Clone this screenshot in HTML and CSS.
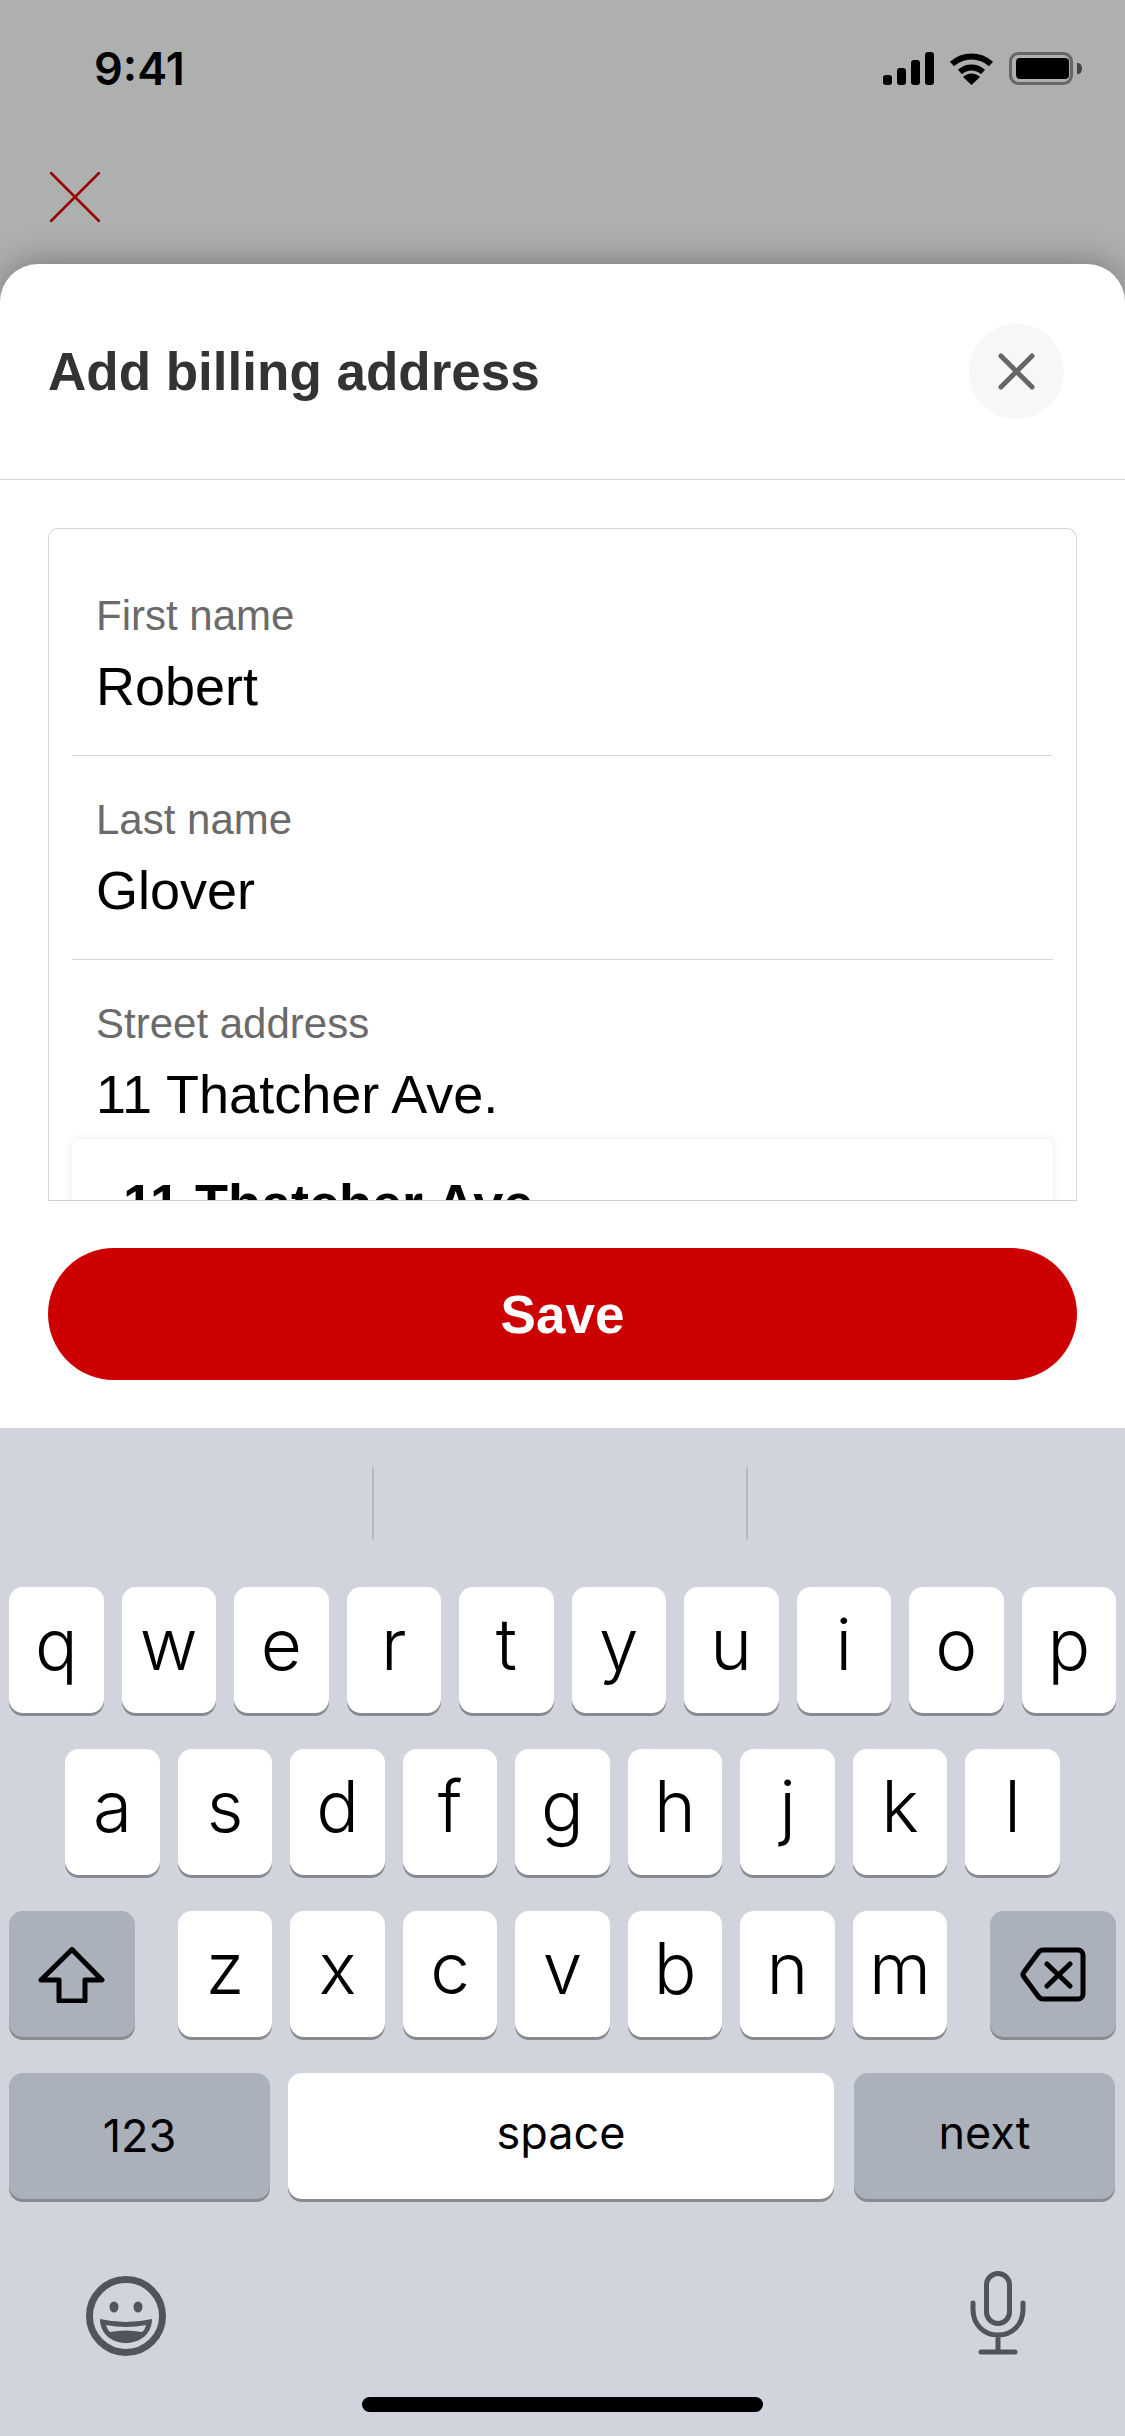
FILE: index.html
```html
<!DOCTYPE html>
<html lang="en">
<head>
    <meta charset="UTF-8">
    <meta name="viewport" content="width=device-width, initial-scale=1.0">
    <title>Add billing address</title>
    <link rel="stylesheet" href="styles.css">
</head>
<body>
    <!-- status bar -->
    <header class="status-bar">
        <span class="status-time">9:41</span>
        <div class="status-icons">
            <svg class="icon-signal" viewBox="0 0 51 33"><rect x="0" y="23" width="9" height="10" rx="3"/><rect x="14" y="16" width="9" height="17" rx="3"/><rect x="28" y="8" width="9" height="25" rx="3"/><rect x="42" y="0" width="9" height="33" rx="3"/></svg>
            <svg class="icon-wifi" viewBox="0 0 45 33"><path d="M3 12 A29 29 0 0 1 42 12 M11 20 A17 17 0 0 1 34 20" fill="none" stroke="#000" stroke-width="6"/><path d="M22.5 33 L14 25 A12 12 0 0 1 31 25 Z"/></svg>
            <svg class="icon-battery" viewBox="0 0 73 33"><rect x="1.5" y="1.5" width="61" height="30" rx="8" fill="none" stroke="#666" stroke-width="3"/><rect x="7" y="6" width="53" height="21" rx="4"/><path d="M68 11 h1 a4 5.500 0 0 1 0 11 h-1 z" fill="#444"/></svg>
        </div>
    </header>

    <!-- page behind the sheet -->
    <div class="back-nav">
        <svg class="icon-back-close" viewBox="0 0 50 50"><path d="M1 1 L49 49 M49 1 L1 49" fill="none" stroke="#990000" stroke-width="2.500" stroke-linecap="round"/></svg>
    </div>

    <main class="sheet">
        <div class="sheet-header">
            <h1 class="sheet-title">Add billing address</h1>
            <button class="sheet-close" aria-label="Close">
                <svg viewBox="0 0 37 37"><path d="M3 3 L34 34 M34 3 L3 34" fill="none" stroke="#666" stroke-width="5" stroke-linecap="round"/></svg>
            </button>
        </div>

        <div class="sheet-body">
            <form class="address-card">
                <div class="field">
                    <div class="field-label">First name</div>
                    <div class="field-value">Robert</div>
                </div>
                <div class="field">
                    <div class="field-label">Last name</div>
                    <div class="field-value">Glover</div>
                </div>
                <div class="field field-open">
                    <div class="field-label">Street address</div>
                    <div class="field-value">11 Thatcher Ave.</div>
                </div>
                <div class="suggestions">
                    <div class="suggestion-line">11 Thatcher Ave</div>
                </div>
            </form>
            <button class="save-button">Save</button>
        </div>
    </main>

    <!-- keyboard -->
    <section class="keyboard">
        <div class="predictions">
            <div class="prediction"></div>
            <div class="prediction"></div>
            <div class="prediction"></div>
        </div>
        <div class="key-rows">
            <div class="key-row">
                <span class="key">q</span><span class="key">w</span><span class="key">e</span><span class="key">r</span><span class="key">t</span><span class="key">y</span><span class="key">u</span><span class="key">i</span><span class="key">o</span><span class="key">p</span>
            </div>
            <div class="key-row">
                <span class="key">a</span><span class="key">s</span><span class="key">d</span><span class="key">f</span><span class="key">g</span><span class="key">h</span><span class="key">j</span><span class="key">k</span><span class="key">l</span>
            </div>
            <div class="key-row key-row-split">
                <span class="key key-dark key-side">
                    <svg class="icon-shift" viewBox="0 0 70 56"><path d="M35 2.500 L65 33 H48 V54 H22 V33 H4 Z" fill="none" stroke="#000" stroke-width="5" stroke-linejoin="round"/></svg>
                </span>
                <div class="key-group">
                    <span class="key">z</span><span class="key">x</span><span class="key">c</span><span class="key">v</span><span class="key">b</span><span class="key">n</span><span class="key">m</span>
                </div>
                <span class="key key-dark key-side">
                    <svg class="icon-delete" viewBox="0 0 67 55"><path d="M23 3 H58 a5 5 0 0 1 5 5 V47 a5 5 0 0 1 -5 5 H23 q-3 0 -5 -3 L4 30 q-2 -2.500 0 -5 L18 6 q2 -3 5 -3 Z M27 17 L50 39 M50 17 L27 39" fill="none" stroke="#000" stroke-width="5" stroke-linejoin="round" stroke-linecap="round"/></svg>
                </span>
            </div>
            <div class="key-row key-row-bottom">
                <span class="key key-dark key-wide key-label key-number">123</span>
                <span class="key key-space key-label">space</span>
                <span class="key key-dark key-wide key-label key-next">next</span>
            </div>
        </div>
        <div class="keyboard-tools">
            <svg class="icon-emoji" viewBox="0 0 80 80">
                <circle cx="40" cy="40" r="36.500" fill="none" stroke="#50555c" stroke-width="7"/>
                <ellipse cx="28" cy="31" rx="4.500" ry="5.500" fill="#50555c"/>
                <ellipse cx="52" cy="31" rx="4.500" ry="5.500" fill="#50555c"/>
                <path d="M14 43 Q40 49 66 43 C66 58 54 67 40 67 C26 67 14 58 14 43 Z" fill="#50555c"/>
                <path d="M20 49 Q40 53 60 49 C59 53 57.500 55 56 56 Q40 53 24 56 C22 54 21 52 20 49 Z" fill="#d1d4dc"/>
            </svg>
            <svg class="icon-mic" viewBox="0 0 56 84">
                <rect x="16.500" y="2.500" width="23" height="50" rx="11.500" fill="none" stroke="#50555c" stroke-width="5"/>
                <path d="M3 32 V38 C3 54 14 64 28 64 C42 64 53 54 53 38 V32 M28 64 V80 M11 81 H45" fill="none" stroke="#50555c" stroke-width="5" stroke-linecap="round"/>
            </svg>
        </div>
        <div class="home-indicator"></div>
    </section>
</body>
</html>
```

FILE: styles.css
```css
:root {
    --backdrop: #aeb0af;
    --line: #d6d6d6;
    --red: #cc0000;
    --kb-bg: #d1d4dc;
    --kb-dark: #abb1bb;
}

* {
    box-sizing: border-box;
}

body {
    margin: 0;
    width: 1125px;
    height: 2436px;
    overflow: hidden;
    background: var(--backdrop);
    font-family: "Liberation Sans", Arial, sans-serif;
    display: flex;
    flex-direction: column;
}

/* status bar */
.status-bar {
    height: 132px;
    padding: 42px 43px 0 94px;
    display: flex;
    justify-content: space-between;
    align-items: flex-start;
}

.status-time {
    font-family: Inter, "Liberation Sans", sans-serif;
    font-size: 45px;
    font-weight: 600;
    line-height: 54px;
    color: #000;
}

.status-icons {
    margin-top: 10px;
    display: flex;
    gap: 15px;
}

.icon-signal {
    width: 51px;
    height: 33px;
}

.icon-wifi {
    width: 45px;
    height: 33px;
}

.icon-battery {
    width: 73px;
    height: 33px;
}

.back-nav {
    height: 132px;
    padding: 40px 0 0 50px;
}

.icon-back-close {
    display: block;
    width: 50px;
    height: 50px;
}

/* sheet */
.sheet {
    height: 1164px;
    background: #fff;
    border-radius: 38px 38px 0 0;
    box-shadow: 0 -6px 30px rgba(0, 0, 0, 0.25);
}

.sheet-header {
    height: 216px;
    padding: 0 61px 0 48px;
    display: flex;
    align-items: center;
    justify-content: space-between;
    border-bottom: 1px solid var(--line);
}

.sheet-title {
    margin: 0;
    font-size: 53px;
    font-weight: 700;
    color: #333;
}

.sheet-close {
    width: 95px;
    height: 95px;
    padding: 0;
    border: none;
    border-radius: 50%;
    background: #f7f7f7;
    display: flex;
    align-items: center;
    justify-content: center;
}

.sheet-close svg {
    width: 37px;
    height: 37px;
}

.sheet-body {
    padding: 48px 48px 0;
}

.address-card {
    height: 673px;
    padding: 23px 23px 0;
    border: 1px solid var(--line);
    border-bottom-color: #cfcfcf;
    border-radius: 10px 10px 0 0;
    overflow: hidden;
}

.field {
    padding: 40px 24px 0;
    border-bottom: 1px solid var(--line);
    height: 204px;
}

.field-open {
    border-bottom: none;
    height: 179px;
}

.field-label {
    font-size: 42px;
    line-height: 48px;
    color: #6a6a6a;
}

.field-value {
    margin-top: 16px;
    font-size: 54px;
    line-height: 60px;
    color: #000;
}

.suggestions {
    height: 200px;
    padding: 34px 51px;
    background: #fff;
    border-radius: 8px;
    box-shadow: 0 0 8px rgba(0, 0, 0, 0.1);
}

.suggestion-line {
    font-size: 54px;
    font-weight: 700;
    line-height: 60px;
    color: #000;
}

.save-button {
    display: block;
    width: 100%;
    height: 132px;
    margin-top: 47px;
    border: none;
    border-radius: 66px;
    background: var(--red);
    color: #fff;
    font-family: inherit;
    font-size: 53px;
    font-weight: 700;
    padding-top: 2px;
}

/* keyboard */
.keyboard {
    flex: 1;
    background: var(--kb-bg);
    display: flex;
    flex-direction: column;
}

.predictions {
    height: 159px;
    padding-top: 39px;
    display: flex;
    align-items: flex-start;
}

.prediction {
    width: 374px;
    height: 73px;
    border-right: 2px solid #b6b9c1;
}

.prediction:last-child {
    border-right: none;
}

.key-rows {
    padding: 0 9px;
    display: flex;
    flex-direction: column;
    gap: 36px;
}

.key-row {
    height: 126px;
    display: flex;
    justify-content: center;
    gap: 18px;
}

.key-row-split {
    justify-content: space-between;
}

.key-row-bottom {
    padding-right: 1px;
}

.key-group {
    display: flex;
    gap: 18px;
}

.key {
    width: 94.5px;
    height: 126px;
    padding-bottom: 12px;
    background: #fff;
    border-radius: 14px;
    box-shadow: 0 3px 0 #898a8e;
    display: flex;
    align-items: center;
    justify-content: center;
    font-family: Inter, "Liberation Sans", sans-serif;
    font-size: 71px;
    font-weight: 300;
    color: #000;
}

.key-dark {
    background: var(--kb-dark);
}

.key-side {
    width: 126px;
    padding-bottom: 0;
}

.key-wide {
    width: 261px;
}

.key-space {
    flex: 1;
}

.key-label {
    padding-bottom: 8px;
    font-size: 45px;
    font-weight: 400;
}

.key-number {
    padding-bottom: 2px;
}

.key-next {
    margin-left: 2px;
}

.icon-shift {
    width: 70px;
    height: 56px;
    margin-top: 2px;
}

.icon-delete {
    width: 67px;
    height: 55px;
}

.keyboard-tools {
    height: 198px;
    padding: 77px 99px 0 86px;
    display: flex;
    justify-content: space-between;
    align-items: flex-start;
}

.icon-emoji {
    width: 80px;
    height: 80px;
}

.icon-mic {
    width: 56px;
    height: 84px;
    margin-top: -5px;
}

.home-indicator {
    width: 401px;
    height: 15px;
    margin: 0 auto;
    border-radius: 8px;
    background: #000;
}
```
